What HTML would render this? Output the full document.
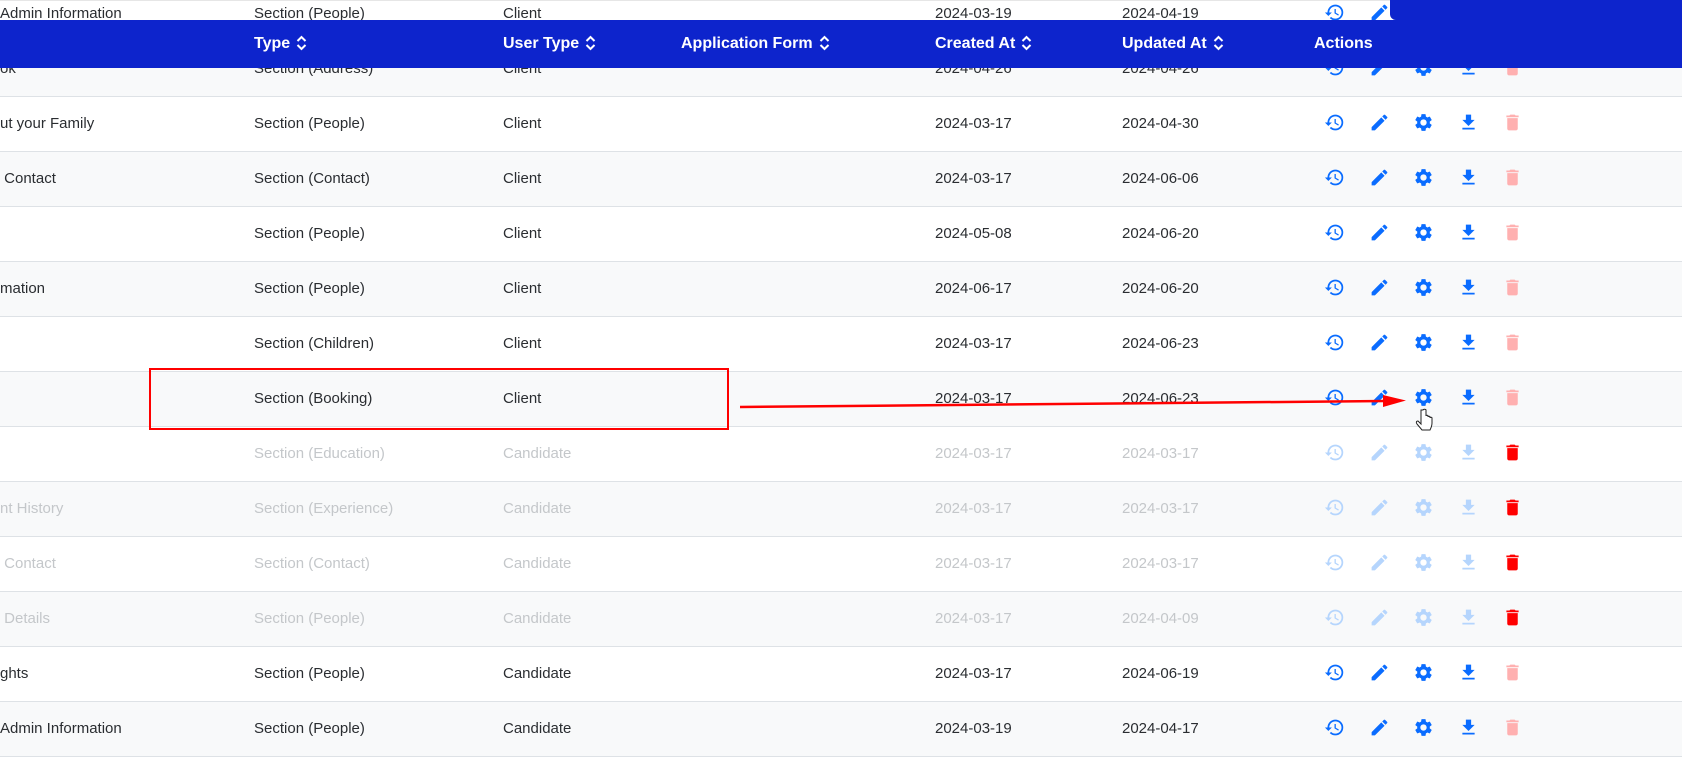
<!DOCTYPE html>
<html><head><meta charset="utf-8">
<style>
*{margin:0;padding:0;box-sizing:border-box}
body{width:1682px;height:732px;overflow:hidden;background:#fff;position:relative;font-family:"Liberation Sans",sans-serif;font-size:15px;color:#2a2d31}
.r{position:absolute;left:0;width:1682px;height:55px;border-bottom:1px solid #dee2e6;background:#fff}
.r.g{background:#f8f9fa}
.r span{position:absolute;top:0;line-height:54px;white-space:nowrap}
.r.f span{color:#c4c7ca}
.c0{left:0}.c1{left:254px}.c2{left:503px}.c4{left:935px}.c5{left:1122px}
.r svg{position:absolute;top:15px;width:21px;height:21px}
.i1{left:1324px}.i2{left:1369px}.i3{left:1413px}.i4{left:1458px}.i5{left:1502px}
.b{fill:#0a6cff}.f .b{fill:#b5d5fd}
.t{fill:#ffb0b0}.f .t{fill:#ff0000}
.hd{position:absolute;left:0;top:20px;width:1682px;height:48px;background:#0d24cc;color:#fff;font-weight:bold;font-size:16px}
.hd span{position:absolute;top:0;line-height:48px;white-space:nowrap}
.hd svg{width:11px;height:16px;vertical-align:-3px;margin-left:6px}
.topb{position:absolute;left:1390px;top:0;width:292px;height:20px;background:#0d24cc;border-bottom-left-radius:6px}
</style></head><body>
<svg width="0" height="0" style="position:absolute">
<defs>
<symbol id="hi" viewBox="0 0 24 24"><path d="M13 3a9 9 0 0 0-9 9H1l3.89 3.89.07.14L9 12H6c0-3.87 3.13-7 7-7s7 3.13 7 7-3.13 7-7 7c-1.930 0-3.68-.79-4.94-2.06l-1.42 1.42A8.954 8.954 0 0 0 13 21a9 9 0 0 0 0-18zm-1 5v5l4.28 2.54.72-1.21-3.5-2.08V8H12z"/></symbol>
<symbol id="ed" viewBox="0 0 24 24"><path d="M3 17.25V21h3.75L17.81 9.94l-3.75-3.75L3 17.25zM20.71 7.04a.996.996 0 0 0 0-1.41l-2.34-2.34a.996.996 0 0 0-1.41 0l-1.83 1.83 3.75 3.75 1.83-1.83z"/></symbol>
<symbol id="st" viewBox="0 0 24 24"><path d="M19.14 12.94c.04-.3.06-.61.06-.94 0-.32-.02-.64-.07-.94l2.03-1.58a.49.49 0 0 0 .12-.61l-1.92-3.32a.488.488 0 0 0-.59-.22l-2.39.96c-.5-.38-1.030-.7-1.62-.94l-.36-2.54a.484.484 0 0 0-.48-.41h-3.84c-.24 0-.43.17-.47.41l-.36 2.54c-.59.24-1.13.57-1.62.94l-2.39-.96c-.22-.08-.47 0-.59.22L2.74 8.87c-.12.21-.08.47.12.61l2.03 1.58c-.05.3-.09.63-.09.94s.02.64.07.94l-2.03 1.58a.49.49 0 0 0-.12.61l1.92 3.32c.12.22.37.29.59.22l2.39-.96c.5.38 1.03.7 1.62.94l.36 2.54c.05.24.24.41.48.41h3.84c.24 0 .44-.17.47-.41l.36-2.54c.59-.24 1.13-.56 1.62-.94l2.39.96c.22.08.47 0 .59-.22l1.92-3.32c.12-.22.07-.47-.12-.61l-2.01-1.58zM12 15.6c-1.98 0-3.6-1.62-3.6-3.6s1.62-3.6 3.6-3.6 3.6 1.62 3.6 3.6-1.62 3.6-3.6 3.6z"/></symbol>
<symbol id="dl" viewBox="0 0 24 24"><path d="M19 9h-4V3H9v6H5l7 7 7-7zM5 18v2h14v-2H5z"/></symbol>
<symbol id="tr" viewBox="0 0 24 24"><path d="M6 19c0 1.1.9 2 2 2h8c1.1 0 2-.9 2-2V7H6v12zM19 4h-3.5l-1-1h-5l-1 1H5v2h14V4z"/></symbol>
<symbol id="so" viewBox="0 0 11 16"><path d="M1.5 6 5.5 2 9.5 6M1.5 10 5.5 14 9.5 10" fill="none" stroke="#fff" stroke-width="2"/></symbol>
</defs></svg>

<div class="r" style="top:-13px"><span class="c0">Admin Information</span><span class="c1">Section (People)</span><span class="c2">Client</span><span class="c4">2024-03-19</span><span class="c5">2024-04-19</span><svg class="i1 b"><use href="#hi"/></svg><svg class="i2 b"><use href="#ed"/></svg><svg class="i3 b"><use href="#st"/></svg><svg class="i4 b"><use href="#dl"/></svg><svg class="i5 t"><use href="#tr"/></svg></div>
<div class="r g" style="top:42px"><span class="c0">ok</span><span class="c1">Section (Address)</span><span class="c2">Client</span><span class="c4">2024-04-26</span><span class="c5">2024-04-26</span><svg class="i1 b"><use href="#hi"/></svg><svg class="i2 b"><use href="#ed"/></svg><svg class="i3 b"><use href="#st"/></svg><svg class="i4 b"><use href="#dl"/></svg><svg class="i5 t"><use href="#tr"/></svg></div>
<div class="r" style="top:97px"><span class="c0">ut your Family</span><span class="c1">Section (People)</span><span class="c2">Client</span><span class="c4">2024-03-17</span><span class="c5">2024-04-30</span><svg class="i1 b"><use href="#hi"/></svg><svg class="i2 b"><use href="#ed"/></svg><svg class="i3 b"><use href="#st"/></svg><svg class="i4 b"><use href="#dl"/></svg><svg class="i5 t"><use href="#tr"/></svg></div>
<div class="r g" style="top:152px"><span class="c0">&nbsp;Contact</span><span class="c1">Section (Contact)</span><span class="c2">Client</span><span class="c4">2024-03-17</span><span class="c5">2024-06-06</span><svg class="i1 b"><use href="#hi"/></svg><svg class="i2 b"><use href="#ed"/></svg><svg class="i3 b"><use href="#st"/></svg><svg class="i4 b"><use href="#dl"/></svg><svg class="i5 t"><use href="#tr"/></svg></div>
<div class="r" style="top:207px"><span class="c1">Section (People)</span><span class="c2">Client</span><span class="c4">2024-05-08</span><span class="c5">2024-06-20</span><svg class="i1 b"><use href="#hi"/></svg><svg class="i2 b"><use href="#ed"/></svg><svg class="i3 b"><use href="#st"/></svg><svg class="i4 b"><use href="#dl"/></svg><svg class="i5 t"><use href="#tr"/></svg></div>
<div class="r g" style="top:262px"><span class="c0">mation</span><span class="c1">Section (People)</span><span class="c2">Client</span><span class="c4">2024-06-17</span><span class="c5">2024-06-20</span><svg class="i1 b"><use href="#hi"/></svg><svg class="i2 b"><use href="#ed"/></svg><svg class="i3 b"><use href="#st"/></svg><svg class="i4 b"><use href="#dl"/></svg><svg class="i5 t"><use href="#tr"/></svg></div>
<div class="r" style="top:317px"><span class="c1">Section (Children)</span><span class="c2">Client</span><span class="c4">2024-03-17</span><span class="c5">2024-06-23</span><svg class="i1 b"><use href="#hi"/></svg><svg class="i2 b"><use href="#ed"/></svg><svg class="i3 b"><use href="#st"/></svg><svg class="i4 b"><use href="#dl"/></svg><svg class="i5 t"><use href="#tr"/></svg></div>
<div class="r g" style="top:372px"><span class="c1">Section (Booking)</span><span class="c2">Client</span><span class="c4">2024-03-17</span><span class="c5">2024-06-23</span><svg class="i1 b"><use href="#hi"/></svg><svg class="i2 b"><use href="#ed"/></svg><svg class="i3 b"><use href="#st"/></svg><svg class="i4 b"><use href="#dl"/></svg><svg class="i5 t"><use href="#tr"/></svg></div>
<div class="r f" style="top:427px"><span class="c1">Section (Education)</span><span class="c2">Candidate</span><span class="c4">2024-03-17</span><span class="c5">2024-03-17</span><svg class="i1 b"><use href="#hi"/></svg><svg class="i2 b"><use href="#ed"/></svg><svg class="i3 b"><use href="#st"/></svg><svg class="i4 b"><use href="#dl"/></svg><svg class="i5 t"><use href="#tr"/></svg></div>
<div class="r g f" style="top:482px"><span class="c0">nt History</span><span class="c1">Section (Experience)</span><span class="c2">Candidate</span><span class="c4">2024-03-17</span><span class="c5">2024-03-17</span><svg class="i1 b"><use href="#hi"/></svg><svg class="i2 b"><use href="#ed"/></svg><svg class="i3 b"><use href="#st"/></svg><svg class="i4 b"><use href="#dl"/></svg><svg class="i5 t"><use href="#tr"/></svg></div>
<div class="r f" style="top:537px"><span class="c0">&nbsp;Contact</span><span class="c1">Section (Contact)</span><span class="c2">Candidate</span><span class="c4">2024-03-17</span><span class="c5">2024-03-17</span><svg class="i1 b"><use href="#hi"/></svg><svg class="i2 b"><use href="#ed"/></svg><svg class="i3 b"><use href="#st"/></svg><svg class="i4 b"><use href="#dl"/></svg><svg class="i5 t"><use href="#tr"/></svg></div>
<div class="r g f" style="top:592px"><span class="c0">&nbsp;Details</span><span class="c1">Section (People)</span><span class="c2">Candidate</span><span class="c4">2024-03-17</span><span class="c5">2024-04-09</span><svg class="i1 b"><use href="#hi"/></svg><svg class="i2 b"><use href="#ed"/></svg><svg class="i3 b"><use href="#st"/></svg><svg class="i4 b"><use href="#dl"/></svg><svg class="i5 t"><use href="#tr"/></svg></div>
<div class="r" style="top:647px"><span class="c0">ghts</span><span class="c1">Section (People)</span><span class="c2">Candidate</span><span class="c4">2024-03-17</span><span class="c5">2024-06-19</span><svg class="i1 b"><use href="#hi"/></svg><svg class="i2 b"><use href="#ed"/></svg><svg class="i3 b"><use href="#st"/></svg><svg class="i4 b"><use href="#dl"/></svg><svg class="i5 t"><use href="#tr"/></svg></div>
<div class="r g" style="top:702px"><span class="c0">Admin Information</span><span class="c1">Section (People)</span><span class="c2">Candidate</span><span class="c4">2024-03-19</span><span class="c5">2024-04-17</span><svg class="i1 b"><use href="#hi"/></svg><svg class="i2 b"><use href="#ed"/></svg><svg class="i3 b"><use href="#st"/></svg><svg class="i4 b"><use href="#dl"/></svg><svg class="i5 t"><use href="#tr"/></svg></div>

<div style="position:absolute;left:0;top:0;width:1682px;height:1px;background:#e6e6e6"></div>
<div class="topb"></div>

<div class="hd">
<span style="left:254px">Type<svg><use href="#so"/></svg></span>
<span style="left:503px">User Type<svg><use href="#so"/></svg></span>
<span style="left:681px">Application Form<svg><use href="#so"/></svg></span>
<span style="left:935px">Created At<svg><use href="#so"/></svg></span>
<span style="left:1122px">Updated At<svg><use href="#so"/></svg></span>
<span style="left:1314px">Actions</span>
</div>

<div style="position:absolute;left:149px;top:368px;width:580px;height:62px;border:2px solid #f00"></div>
<svg style="position:absolute;left:0;top:0" width="1682" height="732">
<line x1="740" y1="407" x2="1385" y2="401" stroke="#f00" stroke-width="2.5"/>
<polygon points="1383,395 1406,400.5 1383,407" fill="#f00"/>
<path d="M1421 410v14l-3-3c-2 0-2 2-1 3l5 6h8c1-2 2-4 2-7v-5c0-1-2-1-2 0v-1c0-1-2-1-2 0v-1c0-1-2-1-2 0v-6c0-1-3-1-3 0z" fill="#fff" stroke="#222" stroke-width="1"/>
</svg>
</body></html>
